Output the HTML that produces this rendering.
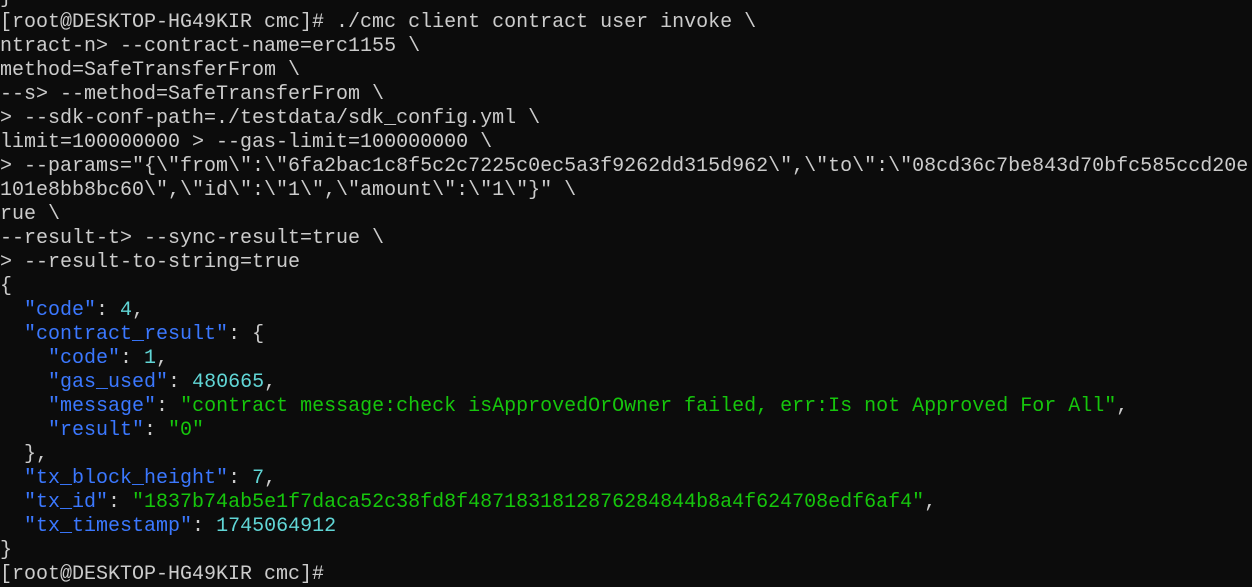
<!DOCTYPE html>
<html><head><meta charset="utf-8"><style>
html,body{margin:0;padding:0;background:#0c0c0c;width:1252px;height:570px;overflow:hidden}
pre{position:absolute;left:0;top:-13px;margin:0;font-family:"Liberation Mono","Noto Sans CJK SC",monospace;font-size:20px;line-height:24px;color:#cccccc;white-space:pre}
.k{color:#3b78ff}.n{color:#61d6d6}.s{color:#16c60c}
</style></head><body><pre>}
[root@DESKTOP-HG49KIR cmc]# ./cmc client contract user invoke \
ntract-n&gt; --contract-name=erc1155 \
method=SafeTransferFrom \
--s&gt; --method=SafeTransferFrom \
&gt; --sdk-conf-path=./testdata/sdk_config.yml \
limit=100000000 &gt; --gas-limit=100000000 \
&gt; --params="{\"from\":\"6fa2bac1c8f5c2c7225c0ec5a3f9262dd315d962\",\"to\":\"08cd36c7be843d70bfc585ccd20e
101e8bb8bc60\",\"id\":\"1\",\"amount\":\"1\"}" \
rue \
--result-t&gt; --sync-result=true \
&gt; --result-to-string=true
{
  <span class="k">"code"</span>: <span class="n">4</span>,
  <span class="k">"contract_result"</span>: {
    <span class="k">"code"</span>: <span class="n">1</span>,
    <span class="k">"gas_used"</span>: <span class="n">480665</span>,
    <span class="k">"message"</span>: <span class="s">"contract message:check isApprovedOrOwner failed, err:Is not Approved For All"</span>,
    <span class="k">"result"</span>: <span class="s">"0"</span>
  },
  <span class="k">"tx_block_height"</span>: <span class="n">7</span>,
  <span class="k">"tx_id"</span>: <span class="s">"1837b74ab5e1f7daca52c38fd8f4871831812876284844b8a4f624708edf6af4"</span>,
  <span class="k">"tx_timestamp"</span>: <span class="n">1745064912</span>
}
[root@DESKTOP-HG49KIR cmc]#
</pre></body></html>
